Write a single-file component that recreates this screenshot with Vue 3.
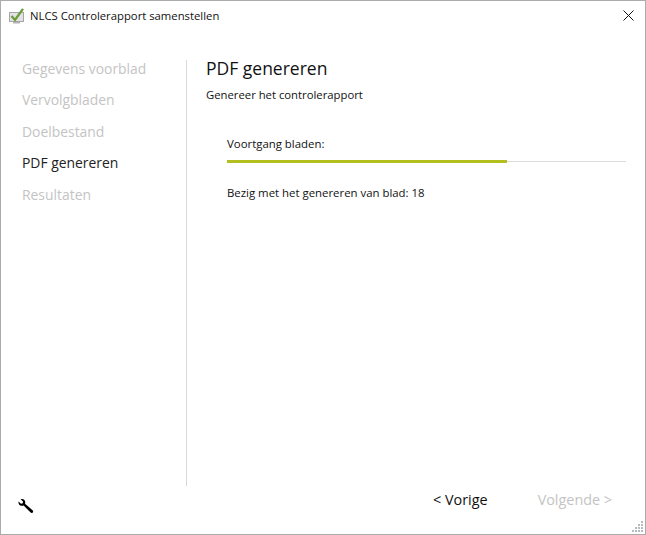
<template>
  <div class="window">
    <header class="titlebar">
      <svg class="app-icon" width="16" height="16" viewBox="0 0 16 16">
        <rect x="0.5" y="4.5" width="14" height="9" fill="#e2e2e2" stroke="#a6a6a6" />
        <rect x="4" y="14" width="7" height="1.5" fill="#b4b4b4" />
        <path d="M2.5 8 L6 12 L14 0.8" fill="none" stroke="#6a9c3c" stroke-width="2.3" />
      </svg>
      <span class="title">NLCS Controlerapport samenstellen</span>
      <svg class="close" width="11" height="11" viewBox="0 0 11 11">
        <path d="M0.5 0.5 L10.5 10.5 M10.5 0.5 L0.5 10.5" stroke="#111" stroke-width="1" fill="none" />
      </svg>
    </header>

    <div class="body">
      <nav class="steps">
        <div v-for="step in steps" :key="step" class="step" :class="{ active: step === current }">{{ step }}</div>
      </nav>
      <main class="content">
        <h1>PDF genereren</h1>
        <p class="sub">Genereer het controlerapport</p>
        <section class="progress-block">
          <div class="label">Voortgang bladen:</div>
          <div class="track">
            <div class="fill" :style="{ width: progress + '%' }"></div>
          </div>
          <div class="status">Bezig met het genereren van blad: 18</div>
        </section>
      </main>
    </div>

    <footer class="footer">
      <svg class="wrench" width="18" height="18" viewBox="0 0 18 18">
        <path d="M1.5 3.5 L4 5.8 L5.8 5.2 L6 3.4 L3.6 1.2 C5.6 0.4 8 1.4 8.2 3.8 C8.3 4.6 8.2 5.2 8 5.8 L15.8 12.4 C17 13.8 15.2 15.8 13.6 14.6 L6.6 7.4 C6 7.7 5.2 7.9 4.4 7.8 C2.4 7.6 1.2 5.6 1.5 3.5 Z" fill="#000" />
      </svg>
      <div class="buttons">
        <span class="btn">&lt; Vorige</span>
        <span class="btn disabled">Volgende &gt;</span>
      </div>
      <svg class="grip" width="12" height="12" viewBox="0 0 12 12">
        <g fill="#b4babd">
          <rect v-for="d in gripDots" :key="d.x + '-' + d.y" :x="d.x" :y="d.y" width="2" height="2" />
        </g>
      </svg>
    </footer>
  </div>
</template>

<script setup>
const steps = ['Gegevens voorblad', 'Vervolgbladen', 'Doelbestand', 'PDF genereren', 'Resultaten']
const current = 'PDF genereren'
const progress = 70.2

// driehoek van puntjes rechtsonder
const gripDots = []
for (let row = 0; row < 4; row++) {
  for (let col = 3 - row; col < 4; col++) {
    gripDots.push({ x: col * 3, y: row * 3 })
  }
}
</script>

<style>
html, body {
  margin: 0;
  background: #fff;
}
</style>

<style scoped>
.window {
  width: 646px;
  height: 535px;
  box-sizing: border-box;
  border: 1px solid #ababab;
  background: #fff;
  display: flex;
  flex-direction: column;
  font-family: "Open Sans", "Noto Sans", sans-serif;
  color: #111;
  overflow: hidden;
}
.titlebar {
  height: 29px;
  flex: none;
  display: flex;
  align-items: center;
  padding: 0 11px 0 8px;
}
.app-icon {
  margin-right: 5px;
}
.title {
  font-size: 11.3px;
  flex: 1;
}
.body {
  flex: 1;
  display: flex;
  padding-top: 30px;
  min-height: 0;
}
.steps {
  width: 164px;
  padding-left: 21px;
  flex: none;
  border-right: 1px solid #d9d9d9;
}
.step {
  height: 31.45px;
  line-height: 17px;
  font-size: 13.9px;
  color: #c4c4c4;
}
.step.active {
  color: #222;
}
.content {
  flex: 1;
  padding: 0 19px 0 19px;
}
h1 {
  margin: 0;
  font-size: 17.5px;
  font-weight: 400;
  line-height: 16px;
  color: #111;
}
.sub {
  margin: 11px 0 0;
  font-size: 11.3px;
  line-height: 15px;
}
.progress-block {
  margin: 34px 0 0 21px;
  font-size: 11.4px;
}
.label {
  line-height: 15px;
}
.track {
  margin-top: 10px;
  height: 1px;
  background: #dcdcdc;
  position: relative;
}
.fill {
  position: absolute;
  left: 0;
  top: -1px;
  height: 3px;
  background: #b2bf1e;
}
.status {
  margin-top: 23px;
  line-height: 15px;
}
.footer {
  height: 48px;
  flex: none;
  display: flex;
  position: relative;
  padding-left: 16px;
  padding-top: 6px;
  box-sizing: border-box;
}
.wrench {
  margin-top: 6px;
}
.buttons {
  position: absolute;
  left: 432px;
  top: 4px;
  display: flex;
  gap: 50px;
  font-size: 14.4px;
  line-height: 19px;
}
.btn.disabled {
  color: #c4c4c4;
}
.grip {
  position: absolute;
  right: 1px;
  bottom: 1px;
}
</style>
